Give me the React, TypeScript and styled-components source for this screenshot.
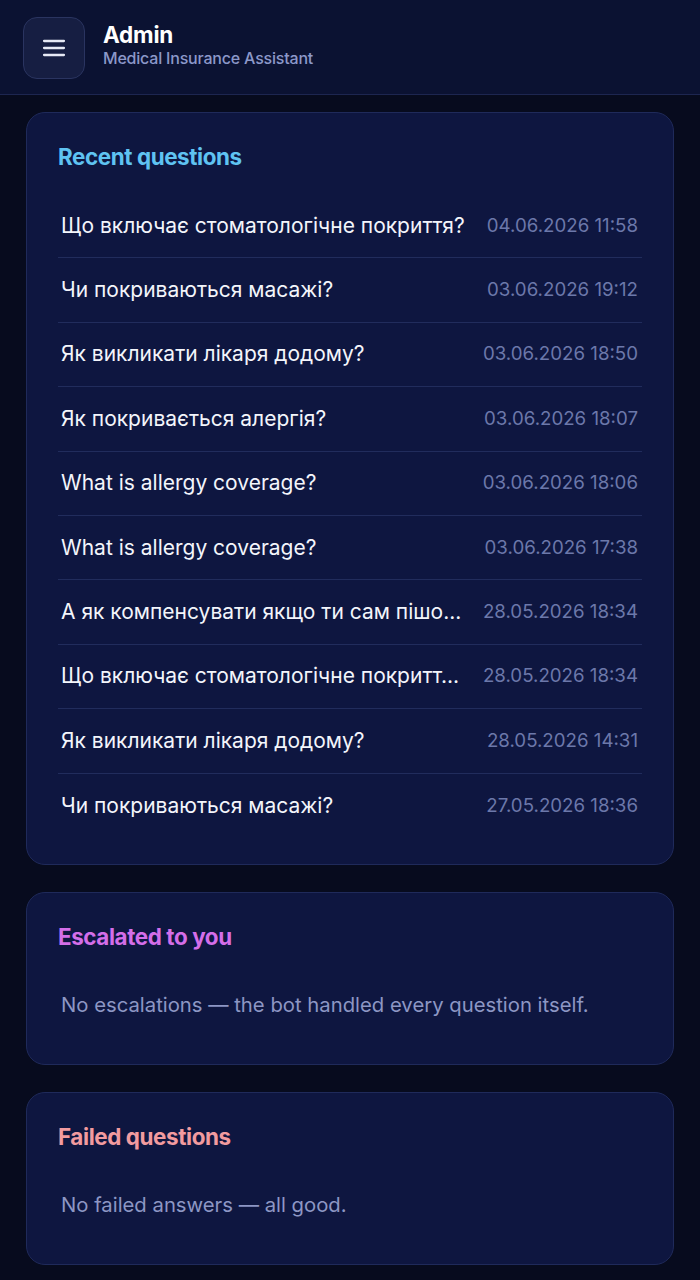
import styled, { createGlobalStyle } from 'styled-components';

interface Question {
  text: string;
  date: string;
}

const questions: Question[] = [
  { text: 'Що включає стоматологічне покриття?', date: '04.06.2026 11:58' },
  { text: 'Чи покриваються масажі?', date: '03.06.2026 19:12' },
  { text: 'Як викликати лікаря додому?', date: '03.06.2026 18:50' },
  { text: 'Як покривається алергія?', date: '03.06.2026 18:07' },
  { text: 'What is allergy coverage?', date: '03.06.2026 18:06' },
  { text: 'What is allergy coverage?', date: '03.06.2026 17:38' },
  { text: 'А як компенсувати якщо ти сам пішо...', date: '28.05.2026 18:34' },
  { text: 'Що включає стоматологічне покритт...', date: '28.05.2026 18:34' },
  { text: 'Як викликати лікаря додому?', date: '28.05.2026 14:31' },
  { text: 'Чи покриваються масажі?', date: '27.05.2026 18:36' },
];

/**
Header : menu button + title
Card : one dashboard section (recent / escalated / failed)
  - CardTitle : coloured section heading
  - QuestionRow : question text and its date
  - Empty : placeholder text when nothing to show
*/

const App = () => (
  <>
    <GlobalStyle />
    <Page>
      <Header>
        <MenuBtn aria-label="menu">
          <svg width="28" height="28" viewBox="0 0 24 24" fill="none">
            <path d="M3.5 6h17M3.5 12h17M3.5 18h17" stroke="#e6e9f5" strokeWidth="2" strokeLinecap="round" />
          </svg>
        </MenuBtn>
        <HeaderText>
          <Title>Admin</Title>
          <Subtitle>Medical Insurance Assistant</Subtitle>
        </HeaderText>
      </Header>

      <Content>
        <Card>
          <CardTitle color="#5fc3f2">Recent questions</CardTitle>
          <List>
            {questions.map((q, i) => (
              <QuestionRow key={i}>
                <QuestionText>{q.text}</QuestionText>
                <DateText>{q.date}</DateText>
              </QuestionRow>
            ))}
          </List>
        </Card>

        <Card>
          <CardTitle color="#d46ee9">Escalated to you</CardTitle>
          <Empty>No escalations — the bot handled every question itself.</Empty>
        </Card>

        <Card>
          <CardTitle color="#f29b9f">Failed questions</CardTitle>
          <Empty>No failed answers — all good.</Empty>
        </Card>
      </Content>
    </Page>
  </>
);

export default App;

const GlobalStyle = createGlobalStyle`
  html, body {
    margin: 0;
    padding: 0;
    background: #070b1e;
  }
  * {
    box-sizing: border-box;
  }
`;

const Page = styled.div`
  width: 700px;
  min-height: 1280px;
  background: #070b1e;
  font-family: Inter, 'Noto Sans', sans-serif;
`;

const Header = styled.header`
  display: flex;
  align-items: center;
  gap: 18px;
  height: 95px;
  padding: 0 23px;
  background: #0b1232;
  border-bottom: 1px solid #1d2650;
`;

const MenuBtn = styled.button`
  display: flex;
  align-items: center;
  justify-content: center;
  width: 62px;
  height: 62px;
  margin-top: 1px;
  padding: 0;
  background: #161e42;
  border: 1px solid #2a3460;
  border-radius: 14px;
`;

const HeaderText = styled.div`
  display: flex;
  flex-direction: column;
  margin-top: -4px;
`;

const Title = styled.div`
  color: #ffffff;
  font-size: 22.5px;
  font-weight: 700;
  line-height: 27px;
  letter-spacing: -0.2px;
`;

const Subtitle = styled.div`
  color: #8c98c9;
  font-size: 16px;
  font-weight: 500;
  line-height: 21px;
  letter-spacing: -0.2px;
`;

const Content = styled.main`
  display: flex;
  flex-direction: column;
  gap: 27px;
  padding: 17px 26px 14px;
`;

const Card = styled.section`
  display: flex;
  flex-direction: column;
  padding: 30px 31px 26px;
  background: #0e1640;
  border: 1px solid #1f2a5a;
  border-radius: 19px;
`;

const CardTitle = styled.h2<{ color: string }>`
  margin: 0 0 23px;
  color: ${(p) => p.color};
  font-size: 22.4px;
  font-weight: 700;
  line-height: 28px;
  letter-spacing: -0.4px;
`;

const List = styled.div`
  display: flex;
  flex-direction: column;
`;

const QuestionRow = styled.div`
  display: flex;
  align-items: center;
  justify-content: space-between;
  gap: 18px;
  height: 64.4px;
  padding: 0 4px 0 3px;
  border-bottom: 1px solid #212c5c;

  &:last-child {
    border-bottom: none;
  }
`;

const QuestionText = styled.span`
  flex: 1;
  min-width: 0;
  overflow: hidden;
  white-space: nowrap;
  text-overflow: ellipsis;
  color: #f3f5fb;
  font-size: 21px;
  line-height: 26px;
`;

const DateText = styled.span`
  flex-shrink: 0;
  color: #6c78aa;
  font-size: 18.7px;
  line-height: 26px;
`;

const Empty = styled.p`
  margin: 0;
  padding: 17px 3px 19px;
  color: #8d97c4;
  font-size: 20.3px;
  line-height: 28px;
`;
